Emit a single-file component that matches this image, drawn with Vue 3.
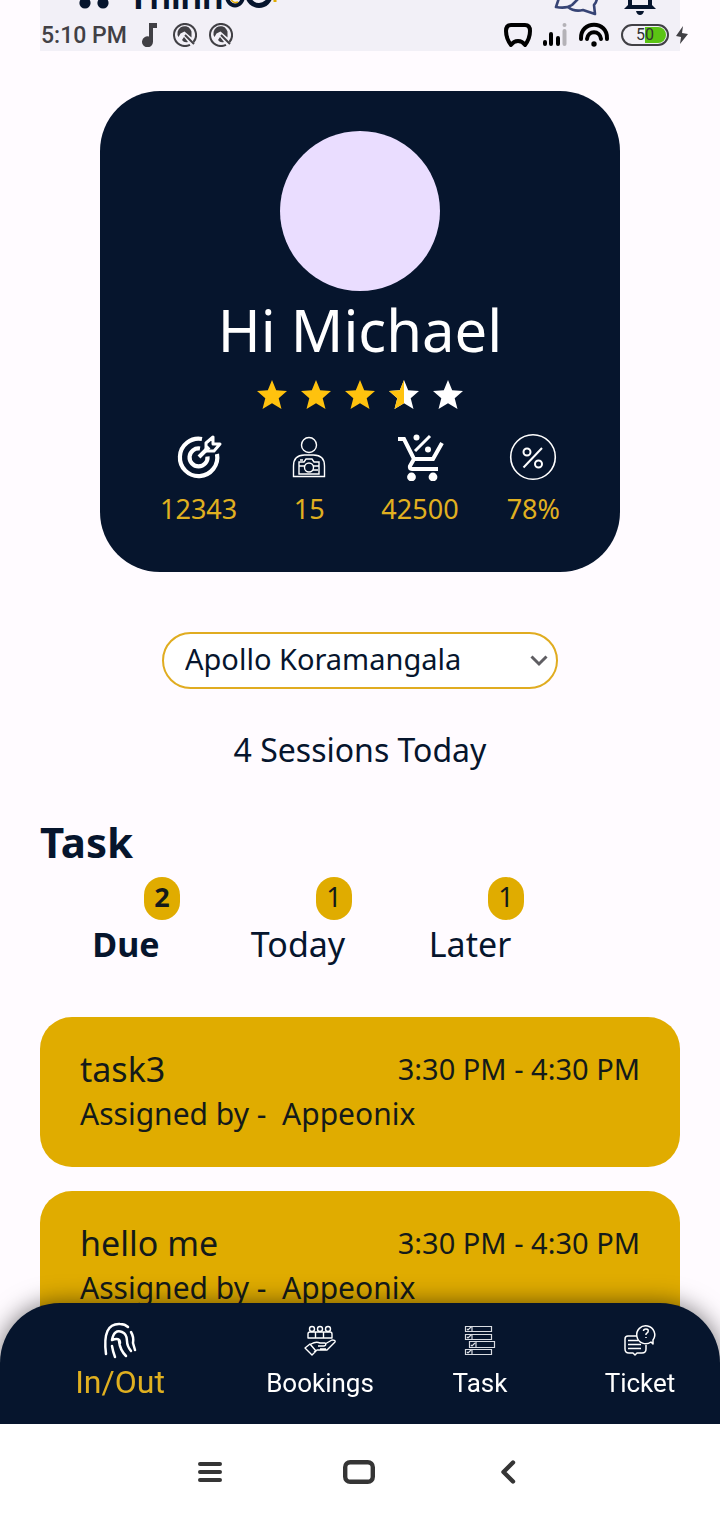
<script setup>
import { ref } from 'vue'

const location = ref('Apollo Koramangala')
const stars = ['full', 'full', 'full', 'half', 'empty']
const tabs = [
  { name: 'Due', count: 2, active: true },
  { name: 'Today', count: 1, active: false },
  { name: 'Later', count: 1, active: false },
]
const tasks = [
  { title: 'task3', time: '3:30 PM - 4:30 PM', by: 'Appeonix' },
  { title: 'hello me', time: '3:30 PM - 4:30 PM', by: 'Appeonix' },
]
</script>

<template>
  <div class="screen">
    <header class="top">
      <div class="brand-row">
        <button class="plain menu" type="button" aria-label="Menu">
          <svg width="32" height="16" viewBox="0 0 32 16"><circle cx="7" cy="3" r="5.6" /><circle cx="25" cy="3" r="5.6" /></svg>
        </button>
        <div class="logo">
          <span class="logo-text">Thinn</span>
          <svg width="56" height="16" viewBox="0 0 56 16" fill="none">
            <path d="M4-4a8 9.500 0 0 0 16 0" stroke="#06152d" stroke-width="4" />
            <path d="M8-1a5 5 0 0 0 7 3" stroke="#e0ac00" stroke-width="1.4" />
            <path d="M25-5a11 10.500 0 0 0 22 0" stroke="#06152d" stroke-width="5" />
            <path d="M52 0v2" stroke="#e0ac00" stroke-width="3" />
          </svg>
        </div>
        <button class="plain chat" type="button" aria-label="Messages">
          <svg width="46" height="16" viewBox="0 0 46 16" fill="none" stroke="#374475" stroke-width="2.6" stroke-linejoin="round"><path d="M5-2 2 7q10 2 16-2l6-6M14 7q6 5 15 3l12 4-1-9q3-3 3-8" /></svg>
        </button>
        <button class="plain bell" type="button" aria-label="Notifications">
          <svg width="32" height="16" viewBox="0 0 32 16"><path d="M4-2h4v7h16v-7h4v7l4 4H0l4-4z" fill="#06152d" /><path d="M12 11h8q-1 4-4 4t-4-4z" fill="#06152d" /></svg>
        </button>
      </div>
      <div class="status">
        <span class="clock">5:10 PM</span>
        <svg class="note" width="18" height="24" viewBox="0 0 18 24" fill="#414045"><path d="M8 0h8v5h-4v13.500a5.500 5.500 0 1 1-4-5z" /></svg>
        <svg v-for="n in 2" :key="n" class="disc" width="24" height="24" viewBox="0 0 24 24" fill="none" stroke="#414045"><path d="M20.500 19A11 11 0 1 0 17 21.800" stroke-width="2" /><path d="M5.500 14a7 7 0 0 1 12-7.500l1 2v6l-7-6-4 2zM9 17l2-3 4 5q-4 1-6-2z" fill="#414045" stroke="none" /><path d="m12 12 9 9" stroke-width="2" /></svg>
        <span class="grow"></span>
        <svg width="30" height="26" viewBox="0 0 30 26" fill="none" stroke="#000" stroke-width="4" stroke-linejoin="round"><path d="M8 3h14c3 0 5 2 5 6 0 6-2 10-5 14-2-3-5-4-7-4s-5 1-7 4C5 19 3 15 3 9c0-4 2-6 5-6z" /></svg>
        <svg class="signal" width="26" height="26" viewBox="0 0 26 26" fill="none" stroke-width="4" stroke-linecap="round"><path d="M3 20v2M9 12v10M16 16v6" stroke="#000" /><path d="M22.500 9v13M22.500 3v.1" stroke="#b4b2b7" /></svg>
        <svg class="wifi" width="32" height="26" viewBox="0 0 32 26" fill="none" stroke="#000" stroke-width="4" stroke-linecap="round"><path d="M3 17C2-2 30-2 29 17M9 17c1-9 13-9 14 0" /><circle cx="16" cy="22" r="2.700" fill="#000" stroke="none" /></svg>
        <span class="battery"><span>50</span></span>
        <svg width="12" height="18" viewBox="0 0 12 18" fill="#414045"><path d="M7 0 0 10l5 1-1 7 8-10-6-1z" /></svg>
      </div>
    </header>

    <main class="content">
      <section class="profile">
        <div class="avatar"></div>
        <h1>Hi Michael</h1>
        <div class="stars" role="img" aria-label="3.5 of 5 stars">
          <svg v-for="(s, i) in stars" :key="i" width="30" height="30" viewBox="0 0 30 30">
            <path :fill="s === 'full' ? '#ffc20e' : '#fff'" d="m15 0 4.200 10.300L30 11l-8.300 7.300L24.500 29 15 23.200 5.500 29l2.800-10.700L0 11l10.800-.7z" />
            <path v-if="s === 'half'" fill="#ffc20e" d="M15 0v23.200L5.500 29l2.800-10.700L0 11l10.800-.7z" />
          </svg>
        </div>
        <div class="stats">
          <div class="stat">
            <svg width="48" height="48" viewBox="0 0 48 48" fill="none" stroke="#fff" stroke-width="4.200"><path d="M27 6A18.700 18.700 0 1 0 42 21" /><path d="M25 15.500a9 9 0 1 0 7.500 8" /><path d="m24 24 10-10" stroke-width="4" /><path d="M31 17v-7l7-6v7h7l-6 7h-8" stroke-width="3" stroke-linejoin="round" /></svg>
            <span>12343</span>
          </div>
          <div class="stat">
            <svg width="48" height="48" viewBox="0 0 48 48" fill="none" stroke="#fff" stroke-width="1.400"><circle cx="24" cy="12" r="7.500" /><path d="M8.500 43.500V33q0-11 11-11h9q11 0 11 11v10.500z" /><path d="M14 29h5l2-3h6l2 3h5v12H14zM14 33h6M28 33h6M28 37h5M15 27h3" /><circle cx="24" cy="34.500" r="4.500" /></svg>
            <span>15</span>
          </div>
          <div class="stat">
            <svg width="48" height="48" viewBox="0 0 48 48" fill="none" stroke="#fff" stroke-width="4"><path d="M2 6h6l10 20h19l9-16" /><path d="m18 26-4 7q-1 3 2 3h26" /><path d="M19 18 34 3" stroke-width="3" /><g fill="#fff" stroke="none"><circle cx="20.500" cy="4.500" r="3" /><circle cx="32" cy="16.500" r="3" /><circle cx="15.500" cy="44" r="4.400" /><circle cx="37" cy="44" r="4.400" /></g></svg>
            <span>42500</span>
          </div>
          <div class="stat">
            <svg width="48" height="48" viewBox="0 0 48 48" fill="none" stroke="#fff" stroke-width="1.600"><circle cx="24" cy="24" r="22.300" /><g stroke-width="2"><path d="M14.500 34.500 33 15" /><circle cx="18" cy="19" r="3.500" /><circle cx="29.500" cy="31" r="3.500" /></g></svg>
            <span>78%</span>
          </div>
        </div>
      </section>

      <div class="picker">
        <select v-model="location" aria-label="Location">
          <option>Apollo Koramangala</option>
        </select>
        <svg width="18" height="12" viewBox="0 0 18 12" fill="none" stroke="#5f5e62" stroke-width="3"><path d="m1.500 1.500 7.500 7.500 7.500-7.500" /></svg>
      </div>
      <p class="sessions">4 Sessions Today</p>

      <h2>Task</h2>
      <div class="tabs">
        <button v-for="t in tabs" :key="t.name" class="plain tab" :class="{ active: t.active }" type="button">
          <span class="count">{{ t.count }}</span>
          <span class="tab-name">{{ t.name }}</span>
        </button>
      </div>

      <article v-for="t in tasks" :key="t.title" class="task">
        <div class="task-head"><h3>{{ t.title }}</h3><time>{{ t.time }}</time></div>
        <p>Assigned by -&nbsp; {{ t.by }}</p>
      </article>
    </main>

    <footer class="bottom">
      <nav class="nav">
        <a href="#inout" class="current">
          <svg width="36" height="38" viewBox="0 0 36 38" fill="none" stroke="#fff" stroke-width="2.500" stroke-linecap="round"><path d="M4 33Q0 2 18 3q5 0 8 3M29 11q3 5 2 11l2 7M10 19q2-11 10-8 5 2 5 9 0 5 4 10M10 25q1 6 3 11M17 20q1 9 7 15M10 19q8-3 8 3" /></svg>
          <span>In/Out</span>
        </a>
        <a href="#bookings">
          <svg width="36" height="38" viewBox="0 0 36 38" fill="none" stroke="#fff" stroke-width="1.400" stroke-linejoin="round"><path d="M6 17v-4q0-2 2-2h20q2 0 2 2v4zM13.500 11v6M21.500 11v6" /><circle cx="10" cy="8" r="2.500" /><circle cx="18" cy="8" r="2.500" /><circle cx="26" cy="8" r="2.500" /><path d="M9 23q5-3 9-1h5q2 2-1 3h-6M23 23l7-4q4 0 3 2l-8 8H15l-3 2M3 27l5-4 6 7-4 4zM18 28h6" /></svg>
          <span>Bookings</span>
        </a>
        <a href="#task">
          <svg width="36" height="38" viewBox="0 0 36 38" fill="none" stroke="#d9dce2" stroke-width="1.200"><path d="M3.500 5.500h26v5h-26zM10 5.500v5M3.500 13.500h26v5h-26zM10 13.500v5M7.500 20.500h25v6h-25zM14 20.500v6M3.500 28.500h26v5h-26zM10 28.500v5M5 8l1 1 3-3M5 16l1 1 3-3M9 24l1 1 3-3M5 31l1 1 3-3" /></svg>
          <span>Task</span>
        </a>
        <a href="#ticket">
          <svg width="36" height="38" viewBox="0 0 36 38" fill="none" stroke="#fff" stroke-width="1.500" stroke-linejoin="round"><path d="M15 15H6q-3 0-3 3v10q0 4 4 4h4l2 2 2-2h5q4 0 4-4v-4M6 19.500h10M6 23.500h13M6 27.500h13" /><path d="M29 21a9 9 0 1 1 2-2v4z" /><path d="M21.500 10q0-2 2.500-2 3 0 2 3l-2 2v1M24 16v1" /></svg>
          <span>Ticket</span>
        </a>
      </nav>
      <div class="system">
        <button class="plain" type="button" aria-label="Recent apps"><svg width="32" height="24" viewBox="0 0 32 24" stroke="#353535" stroke-width="4" stroke-linecap="round"><path d="M6 4h20M6 12h20M6 20h20" /></svg></button>
        <button class="plain" type="button" aria-label="Home"><svg width="32" height="24" viewBox="0 0 32 24" fill="none" stroke="#353535" stroke-width="4.400"><rect x="2.200" y="2.200" width="27.600" height="19.600" rx="5" /></svg></button>
        <button class="plain" type="button" aria-label="Back"><svg width="32" height="24" viewBox="0 0 32 24" fill="none" stroke="#353535" stroke-width="4.400" stroke-linecap="round" stroke-linejoin="round"><path d="m21 2.500-9.500 9.500 9.500 9.500" /></svg></button>
      </div>
    </footer>
  </div>
</template>

<style>
body { background: #fffbff; }
</style>

<style scoped>
.screen { min-height: 100vh; box-sizing: border-box; padding-bottom: 120px; background: #fffbff; color: #06152d; font-family: "Noto Sans", "Open Sans", sans-serif; }
h1, h2, h3, p { margin: 0; font-weight: 400; }
svg { display: block; flex: none; }
.plain { border: 0; padding: 0; background: none; color: inherit; font: inherit; cursor: pointer; }
.top { margin: 0 40px; height: 51px; background: #f2f0f7; }
.brand-row { display: flex; align-items: flex-end; height: 16px; overflow: hidden; padding: 0 24px 0 38px; }
.menu { fill: #06152d; }
.logo { display: flex; align-items: flex-end; margin-left: 17px; }
.logo-text { padding-bottom: 6px; font: 700 38px/32px "Lato", sans-serif; }
.chat { margin-left: auto; }
.bell { margin-left: 24px; }
.status { display: flex; align-items: center; height: 38px; margin: 0 -8px 0 1px; font-family: Roboto, sans-serif; }
.clock { font-size: 23px; font-weight: 500; color: #414045; }
.note { margin-left: 14px; }
.disc { margin-left: 14px; }
.disc + .disc { margin-left: 12px; }
.grow { flex: 1; }
.signal { margin-left: 9px; }
.wifi { margin-left: 10px; }
.battery { display: flex; align-items: center; justify-content: center; box-sizing: border-box; width: 48px; height: 22px; margin: 0 7px 0 11px; border: 2px solid #414045; border-radius: 11px; padding: 1px; color: #333; font-size: 16px; }
.battery span { flex: 1; border-radius: 0 8px 8px 0; line-height: 16px; text-align: center; background: linear-gradient(90deg, transparent 50%, #5bc414 50%); }
.content { padding: 40px; }
.profile { display: flex; flex-direction: column; align-items: center; margin: 0 60px; padding: 40px 60px 43px; border-radius: 60px; background: #06152d; color: #fff; }
.avatar { width: 160px; height: 160px; border-radius: 50%; background: #eaddff; }
h1 { font-size: 58px; line-height: 78px; }
.stars { display: flex; gap: 14px; margin-top: 11px; }
.stats { display: flex; align-self: stretch; justify-content: space-between; margin-top: 23px; }
.stat { display: flex; flex-direction: column; align-items: center; gap: 8px; font-size: 27px; line-height: 40px; color: #e0b020; }
.picker { position: relative; width: 396px; max-width: 100%; margin: 60px auto 0; }
.picker select { display: block; box-sizing: border-box; width: 100%; height: 57px; padding: 0 50px 4px 21px; border: 2px solid #e0ac20; border-radius: 29px; background: #fff; color: #06152d; font: 29px "Noto Sans", sans-serif; appearance: none; }
.picker svg { position: absolute; right: 10px; top: 23px; pointer-events: none; }
.sessions { margin-top: 39px; font-size: 32px; line-height: 44px; text-align: center; }
h2 { margin-top: 43px; font-size: 42px; font-weight: 700; line-height: 54px; }
.tabs { display: flex; margin-top: 8px; }
.tab { display: flex; flex-direction: column; width: 172px; }
.count { align-self: flex-end; width: 36px; height: 43px; margin-right: 32px; border-radius: 18px; background: #e0ac00; color: #141a1a; font-size: 27px; line-height: 40px; text-align: center; }
.tab-name { font-size: 34px; line-height: 48px; text-align: center; }
.active { font-weight: 700; }
.task { margin-top: 24px; padding: 28px 40px 32px; border-radius: 32px; background: #e0ac00; color: #141a1a; }
.tabs + .task { margin-top: 49px; }
.task-head { display: flex; align-items: center; justify-content: space-between; }
h3 { font-size: 34px; line-height: 48px; }
time { font-size: 29px; line-height: 44px; }
.task p { font-size: 30px; line-height: 42px; }
.bottom { position: fixed; right: 0; bottom: 0; left: 0; }
.nav { display: flex; box-sizing: border-box; height: 121px; padding: 18px 0 0 40px; border-radius: 60px 60px 0 0; background: #06152d; box-shadow: 0 0 24px rgba(0, 0, 0, .55); }
.nav a { display: flex; flex: 4; flex-direction: column; align-items: center; color: #fff; text-decoration: none; font: 26px/48px Roboto, sans-serif; }
.nav .current { margin-right: 40px; color: #e0b020; font-size: 32px; line-height: 46px; }
.system { position: relative; display: flex; justify-content: center; align-items: center; gap: 117px; height: 96px; padding-right: 2px; background: #fff; }
</style>
